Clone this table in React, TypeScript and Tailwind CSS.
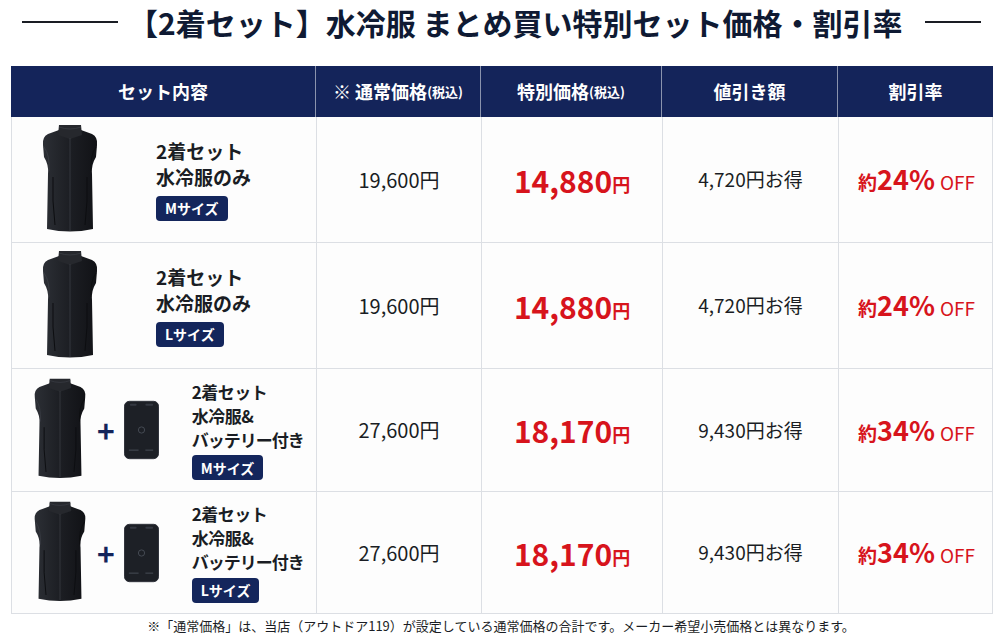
import React from "react";

const font = { fontFamily: '"Noto Sans CJK JP", "Noto Sans", sans-serif' };

const Vest = ({ className }: { className?: string }) => (
  <svg viewBox="0 0 60 110" className={className}>
    <defs>
      <linearGradient id="vestShade" x1="0" x2="1" y1="0" y2="0">
        <stop offset="0" stopColor="#2c2f35" />
        <stop offset="0.5" stopColor="#1c1e23" />
        <stop offset="1" stopColor="#111216" />
      </linearGradient>
    </defs>
    <path
      d="M19 5 L8 9 Q2 12 3 20 L4 32 Q9 40 8 49 L7 104 Q30 109 53 104 L52 49 Q51 40 56 32 L57 20 Q58 12 52 9 L41 5 Z"
      fill="url(#vestShade)"
    />
    <path d="M4 22 Q10 30 9 46" stroke="#3a3d44" strokeWidth="0.8" fill="none" />
    <path d="M56 22 Q50 30 51 46" stroke="#0b0c0e" strokeWidth="0.8" fill="none" />
    <path d="M19 0 L41 0 L42 10 L30 14 L18 10 Z" fill="#26282d" />
    <path d="M19 2 Q30 6 41 2" stroke="#3a3d44" strokeWidth="0.8" fill="none" />
    <line x1="30" y1="13" x2="30" y2="106" stroke="#3b3e45" strokeWidth="0.8" />
    <path d="M13 52 Q12 76 15 100" stroke="#0c0d10" strokeWidth="1" fill="none" />
    <path d="M47 52 Q48 76 45 100" stroke="#0c0d10" strokeWidth="1" fill="none" />
  </svg>
);

const Battery = ({ className }: { className?: string }) => (
  <svg viewBox="0 0 36 60" className={className}>
    <rect x="0.5" y="0.5" width="35" height="59" rx="5" fill="#1d2026" stroke="#2e323a" />
    <rect x="6" y="3" width="7" height="2" rx="1" fill="#343841" />
    <rect x="22" y="3" width="8" height="2" rx="1" fill="#343841" />
    <circle cx="18" cy="30" r="3.2" fill="none" stroke="#4a4f59" strokeWidth="0.9" />
    <rect x="5" y="50" width="10" height="1.5" fill="#3a3e47" />
    <rect x="22" y="50" width="8" height="1.5" fill="#3a3e47" />
  </svg>
);

const SizeBadge = ({ size }: { size: string }) => (
  <span className="inline-flex items-center rounded-[4px] bg-[#14265c] px-[9px] h-[25px] text-[14px] font-bold text-white leading-none">
    {size}サイズ
  </span>
);

type Row = {
  battery: boolean;
  size: string;
  regular: string;
  special: string;
  discount: string;
  rate: string;
  h: string;
};

const rows: Row[] = [
  { battery: false, size: "M", regular: "19,600", special: "14,880", discount: "4,720", rate: "24", h: "h-[126px]" },
  { battery: false, size: "L", regular: "19,600", special: "14,880", discount: "4,720", rate: "24", h: "h-[126px]" },
  { battery: true, size: "M", regular: "27,600", special: "18,170", discount: "9,430", rate: "34", h: "h-[123px]" },
  { battery: true, size: "L", regular: "27,600", special: "18,170", discount: "9,430", rate: "34", h: "h-[122px]" },
];

const cols = "grid grid-cols-[305px_165px_181px_176px_155px]";

export default function App() {
  return (
    <div className="w-[1002px] h-[637px] bg-white text-[#1a1d24] overflow-hidden" style={font}>
      <div className="flex items-center h-[44px] pl-[22px]">
        <div className="h-[2px] w-[96px] shrink-0 bg-[#1a1d24]" />
        <h1 className="ml-[10px] shrink-0 text-[30px] font-bold text-[#0f1a33] leading-[44px] whitespace-nowrap">
          【2着セット】水冷服 まとめ買い特別セット価格・割引率
        </h1>
        <div className="h-[2px] w-[56px] shrink-0 bg-[#1a1d24] ml-[22px]" />
      </div>

      <div className="ml-[11px] mt-[22px] w-[982px]">
        <div className={`${cols} h-[51px] bg-[#14245a] text-white`}>
          <div className="flex items-center justify-center text-[18px] font-bold border-r border-[#8a93ad]">
            セット内容
          </div>
          <div className="flex items-center justify-center text-[18px] font-bold border-r border-[#8a93ad]">
            ※ 通常価格<span className="text-[13px]">(税込)</span>
          </div>
          <div className="flex items-center justify-center text-[18px] font-bold border-r border-[#8a93ad]">
            特別価格<span className="text-[13px]">(税込)</span>
          </div>
          <div className="flex items-center justify-center text-[18px] font-bold border-r border-[#8a93ad]">
            値引き額
          </div>
          <div className="flex items-center justify-center text-[18px] font-bold">割引率</div>
        </div>

        {rows.map((r, i) => (
          <div
            key={i}
            className={`${cols} ${r.h} border-b border-x border-[#dcdfe4] bg-[#fdfdfd]`}
          >
            <div className="flex items-center border-r border-[#dcdfe4]">
              {r.battery ? (
                <>
                  <Vest className="ml-[20px] w-[56px] h-[106px]" />
                  <span className="ml-[9px] text-[30px] font-bold text-[#14245a] leading-none">+</span>
                  <Battery className="ml-[9px] w-[35px] h-[60px]" />
                  <div className="ml-[33px] flex flex-col items-start whitespace-nowrap">
                    <div className="text-[17px] font-bold leading-[24px] tracking-[-0.5px]">2着セット</div>
                    <div className="text-[17px] font-bold leading-[24px] tracking-[-0.5px]">水冷服&amp;</div>
                    <div className="text-[17px] font-bold leading-[24px] tracking-[-1px]">バッテリー付き</div>
                    <div className="mt-[3px]">
                      <SizeBadge size={r.size} />
                    </div>
                  </div>
                </>
              ) : (
                <>
                  <Vest className="ml-[26px] w-[64px] h-[110px]" />
                  <div className="ml-[54px] flex flex-col items-start">
                    <div className="text-[19px] font-bold leading-[26px]">2着セット</div>
                    <div className="text-[19px] font-bold leading-[26px]">水冷服のみ</div>
                    <div className="mt-[5px]">
                      <SizeBadge size={r.size} />
                    </div>
                  </div>
                </>
              )}
            </div>
            <div className="flex items-center justify-center border-r border-[#dcdfe4] text-[20px]">
              {r.regular}円
            </div>
            <div className="flex items-center justify-center border-r border-[#dcdfe4] text-[#d7141c] font-bold">
              <span className="text-[30px] leading-[44px]">{r.special}</span>
              <span className="text-[18px] leading-[26px] mt-[8px]">円</span>
            </div>
            <div className="flex items-center justify-center border-r border-[#dcdfe4] text-[19px]">
              {r.discount}円お得
            </div>
            <div className="flex items-baseline justify-center self-center text-[#d7141c]">
              <span className="text-[19px] font-bold">約</span>
              <span className="text-[27px] font-bold">{r.rate}%</span>
              <span className="text-[19px] ml-[5px]">OFF</span>
            </div>
          </div>
        ))}
      </div>

      <p className="text-center text-[13px] mt-[3px] text-[#1a1d24] leading-[18px]">
        ※「通常価格」は、当店（アウトドア119）が設定している通常価格の合計です。メーカー希望小売価格とは異なります。
      </p>
    </div>
  );
}
